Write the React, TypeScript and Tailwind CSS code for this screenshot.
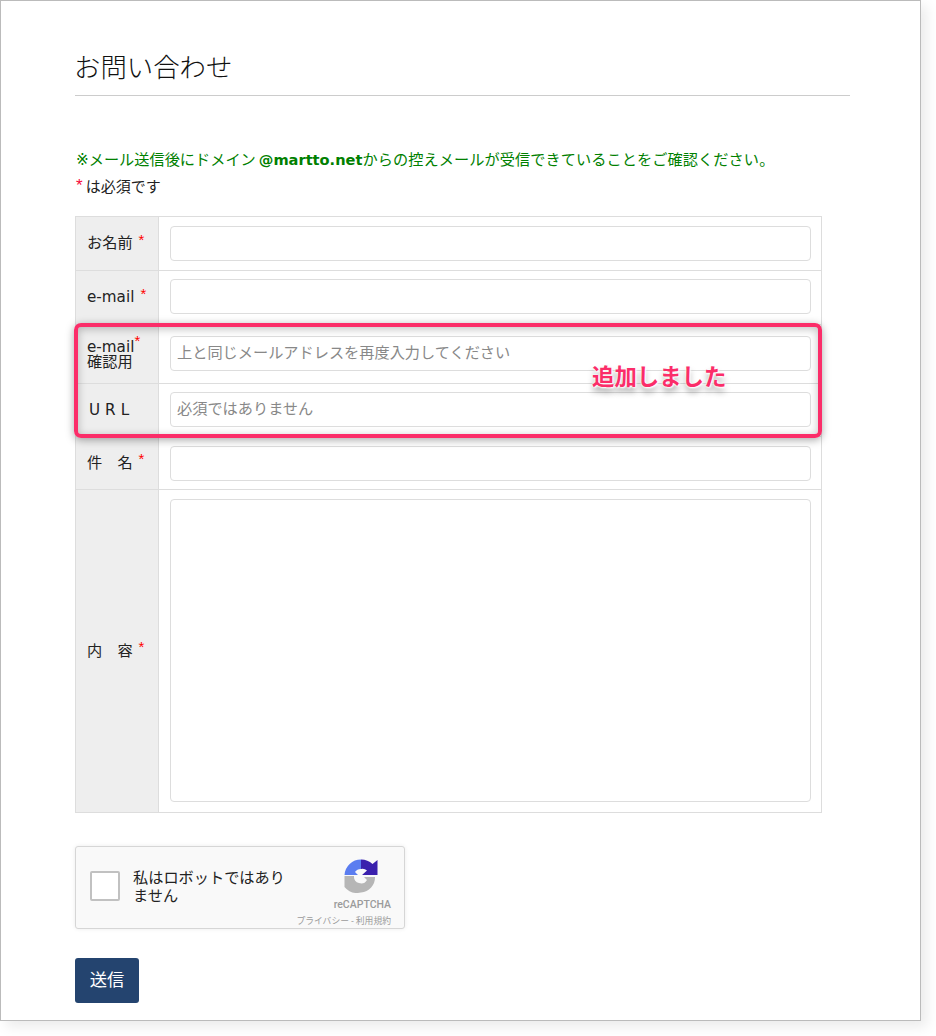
const jp = '[font-family:"DejaVu_Sans","Noto_Sans_CJK_JP",sans-serif]';

function Req({ className = '' }: { className?: string }) {
  return <span className={`text-[#f00] text-[15px] leading-none [font-family:"Liberation_Sans",sans-serif] ${className}`}>*</span>;
}

function Row({
  label,
  height,
  placeholder,
  top,
}: {
  label: React.ReactNode;
  height: string;
  placeholder?: string;
  top: string;
}) {
  return (
    <div className={`flex border-b border-[#ddd] ${height}`}>
      <div className="w-[83px] shrink-0 bg-[#eee] border-r border-[#ddd] pl-[11px] flex items-center text-[15.2px] text-[#222]">
        {label}
      </div>
      <div className={`flex-1 pl-[11px] pr-[10px] ${top}`}>
        <input
          placeholder={placeholder}
          className="block w-full h-[35px] border border-[#ddd] rounded-[4px] pl-[6px] pr-[7px] pb-[1px] text-[15.2px] placeholder:text-[#888] bg-white"
        />
      </div>
    </div>
  );
}

function RecaptchaLogo() {
  return (
    <svg viewBox="0 0 34 34" className="w-[34px] h-[34px]">
      <path d="M0.5 16 A16.5 16.5 0 0 1 17 0.5 V10 A7 7 0 0 0 11 13 L14 16 Z" fill="#5b7df0" />
      <path d="M17 0.5 A16.5 16.5 0 0 1 28.5 5 L33.5 1 V16 H18 L23 11.5 A7 7 0 0 0 17 10 Z" fill="#3a20ad" />
      <path d="M0.5 17 H10 A7 7 0 0 0 23 21 L20 18 L31 18 A15 15 0 0 1 17 33.5 A16.5 16.5 0 0 1 0.5 28 Z" fill="#b6b6b6" />
    </svg>
  );
}

export default function App() {
  return (
    <div className={`w-[936px] h-[1036px] bg-white ${jp}`}>
      <div className="relative w-[921px] h-[1021px] border border-[#bbb] shadow-[6px_6px_12px_rgba(0,0,0,0.08)] pl-[74px] pt-[51px]">
        <h1 className="w-[775px] h-[44px] border-b border-[#ccc] text-[26.4px] leading-[32px] -indent-[1px] text-[#111] font-light">
          お問い合わせ
        </h1>
        <p className="mt-[52px] pl-[1px] text-[15.2px] leading-[24px] text-[#008000]">
          ※メール送信後にドメイン<b className="font-bold ml-[3px] text-[14.6px]">@martto.net</b>
          <span className="tracking-[0.07px]">からの控えメールが受信できていることをご確認ください。</span>
        </p>
        <p className="mt-[3px] pl-[1px] text-[15px] leading-[24px] text-[#222] flex items-center">
          <span className="text-[#f50a3c] text-[17px] leading-none -mt-[4px] mr-[3px] [font-family:'Liberation_Sans',sans-serif]">*</span>は必須です
        </p>

        <div className="mt-[17px] w-[747px] border border-b-0 border-[#ddd]">
          <Row
            height="h-[54px]"
            top="pt-[9px]"
            label={
              <>
                お名前<Req className="ml-[6px] -mt-[9px]" />
              </>
            }
          />
          <Row
            height="h-[54px]"
            top="pt-[8px]"
            label={
              <>
                e-mail<Req className="ml-[6px] -mt-[9px]" />
              </>
            }
          />
          <Row
            height="h-[59px]"
            top="pt-[11px]"
            placeholder="上と同じメールアドレスを再度入力してください"
            label={
              <div className="leading-[15px]">
                e-mail<Req className="relative -top-[6px]" />
                <br />
                確認用
              </div>
            }
          />
          <Row
            height="h-[53px]"
            top="pt-[8px]"
            placeholder="必須ではありません"
            label={<span className="pl-[2px] tracking-[5px]">URL</span>}
          />
          <Row
            height="h-[53px]"
            top="pt-[9px]"
            label={
              <>
                件　名<Req className="ml-[6px] -mt-[9px]" />
              </>
            }
          />
          <div className="flex border-b border-[#ddd] h-[323px]">
            <div className="w-[83px] shrink-0 bg-[#eee] border-r border-[#ddd] pl-[11px] flex items-center text-[15.2px] text-[#222]">
              内　容<Req className="ml-[6px] -mt-[9px]" />
            </div>
            <div className="flex-1 pl-[11px] pr-[10px] pt-[9px]">
              <textarea className="block w-full h-[303px] border border-[#ddd] rounded-[4px] bg-white resize-none" />
            </div>
          </div>
        </div>

        <div className="mt-[33px] w-[330px] h-[83px] bg-[#f9f9f9] border border-[#d6d6d6] rounded-[3px] shadow-[0_0_4px_rgba(0,0,0,0.08)] flex relative">
          <div className="mt-[24px] ml-[14px] w-[30px] h-[30px] bg-white border-2 border-[#c1c1c1] rounded-[2px]" />
          <div className="ml-[13px] mt-[22px] w-[156px] text-[15.2px] leading-[18px] text-[#222]">
            私はロボットではありません
          </div>
          <div className="absolute right-[13px] top-[12px] flex flex-col items-end">
            <div className="mr-[13px]">
              <RecaptchaLogo />
            </div>
            <div className="mt-[6px] text-[10.5px] leading-[12px] font-medium text-[#9b9b9b] [font-family:Roboto,sans-serif]">
              reCAPTCHA
            </div>
            <div className="mt-[4px] text-[8.8px] leading-[12px] text-[#9b9b9b] [font-family:Roboto,'Noto_Sans_CJK_JP',sans-serif]">
              プライバシー - 利用規約
            </div>
          </div>
        </div>

        <button className="mt-[29px] block w-[64px] h-[45px] bg-[#24446f] rounded-[3px] text-white text-[17.3px]">
          送信
        </button>

        {/* 注釈 */}
        <div className="absolute left-[73px] top-[322px] w-[748px] h-[115px] border-[4px] border-[#fb2d69] rounded-[7px] shadow-[0_2px_8px_rgba(0,0,0,0.35),inset_0_2px_8px_rgba(0,0,0,0.25)]" />
        <div className="absolute left-[591px] top-[360px] text-[22.4px] leading-[32px] font-semibold text-[#fb2d69] [text-shadow:0_0_2px_#fff,0_0_2px_#fff,1px_1px_2px_#fff,0_5px_6px_rgba(0,0,0,0.4)]">
          追加しました
        </div>
      </div>
    </div>
  );
}
